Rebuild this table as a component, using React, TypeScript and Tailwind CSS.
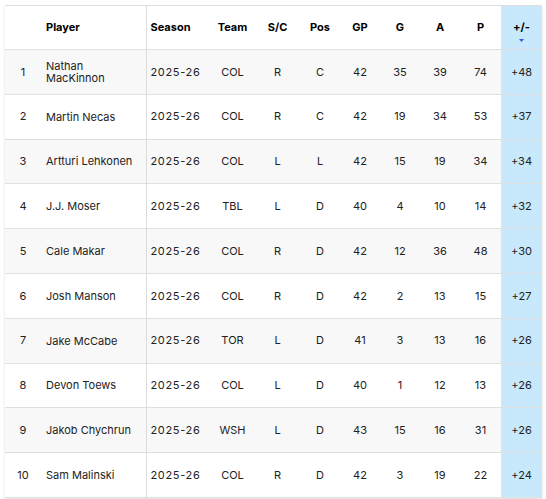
const players = [
  { rank: 1, name: 'Nathan MacKinnon', team: 'COL', sc: 'R', pos: 'C', gp: 42, g: 35, a: 39, p: 74, pm: '+48' },
  { rank: 2, name: 'Martin Necas', team: 'COL', sc: 'R', pos: 'C', gp: 42, g: 19, a: 34, p: 53, pm: '+37' },
  { rank: 3, name: 'Artturi Lehkonen', team: 'COL', sc: 'L', pos: 'L', gp: 42, g: 15, a: 19, p: 34, pm: '+34' },
  { rank: 4, name: 'J.J. Moser', team: 'TBL', sc: 'L', pos: 'D', gp: 40, g: 4, a: 10, p: 14, pm: '+32' },
  { rank: 5, name: 'Cale Makar', team: 'COL', sc: 'R', pos: 'D', gp: 42, g: 12, a: 36, p: 48, pm: '+30' },
  { rank: 6, name: 'Josh Manson', team: 'COL', sc: 'R', pos: 'D', gp: 42, g: 2, a: 13, p: 15, pm: '+27' },
  { rank: 7, name: 'Jake McCabe', team: 'TOR', sc: 'L', pos: 'D', gp: 41, g: 3, a: 13, p: 16, pm: '+26' },
  { rank: 8, name: 'Devon Toews', team: 'COL', sc: 'L', pos: 'D', gp: 40, g: 1, a: 12, p: 13, pm: '+26' },
  { rank: 9, name: 'Jakob Chychrun', team: 'WSH', sc: 'L', pos: 'D', gp: 43, g: 15, a: 16, p: 31, pm: '+26' },
  { rank: 10, name: 'Sam Malinski', team: 'COL', sc: 'R', pos: 'D', gp: 42, g: 3, a: 19, p: 22, pm: '+24' },
];

const statHeaders = ['GP', 'G', 'A', 'P'];

export default function App() {
  return (
    <div className="bg-white w-[546px] h-[499px] overflow-hidden pl-[5px] pt-[5px] font-['Inter',sans-serif]">
      <table className="table-fixed border-collapse w-[537px] text-[11px] text-[#222] shadow-[0_2px_3px_rgba(0,0,0,0.12)]">
        <colgroup>
          <col className="w-[33px]" />
          <col className="w-[108px]" />
          <col className="w-[64px]" />
          <col className="w-[45px]" />
          <col className="w-[45px]" />
          <col className="w-[40px]" />
          <col className="w-[40px]" />
          <col className="w-[40px]" />
          <col className="w-[40px]" />
          <col className="w-[41px]" />
          <col className="w-[41px]" />
        </colgroup>
        <thead>
          <tr className="h-[44px] border-t border-b border-[#e0e0e0] text-black font-semibold">
            <th />
            <th className="text-left pl-2 border-r border-[#dcdcdc]">Player</th>
            <th className="text-left pl-1">Season</th>
            <th className="text-center">Team</th>
            <th className="text-center">S/C</th>
            <th className="text-center">Pos</th>
            {statHeaders.map((h) => (
              <th key={h} className="text-center">{h}</th>
            ))}
            <th className="text-center bg-[#c8e8fb]">
              <div className="flex flex-col items-center pt-[6px]">
                <span>+/-</span>
                <svg width="5" height="3" viewBox="0 0 5 3" className="mt-[4px]">
                  <path d="M0 0 H5 L2.5 3 Z" fill="#2563eb" />
                </svg>
              </div>
            </th>
          </tr>
        </thead>
        <tbody>
          {players.map((pl) => (
            <tr
              key={pl.rank}
              className={`h-[44.8px] border-b border-[#e0e0e0] ${pl.rank % 2 === 1 ? 'bg-[#f8f8f8]' : 'bg-white'}`}
            >
              <td className="text-center pl-[3px]">{pl.rank}</td>
              <td className="pl-2 pr-2 leading-[12px] border-r border-[#dcdcdc]">{pl.name}</td>
              <td className="pl-1 tracking-[0.06em]">2025-26</td>
              <td className="text-center">{pl.team}</td>
              <td className="text-center">{pl.sc}</td>
              <td className="text-center">{pl.pos}</td>
              <td className="text-center">{pl.gp}</td>
              <td className="text-center">{pl.g}</td>
              <td className="text-center">{pl.a}</td>
              <td className="text-center">{pl.p}</td>
              <td className="text-center bg-[#c8e8fb]">{pl.pm}</td>
            </tr>
          ))}
        </tbody>
      </table>
    </div>
  );
}
